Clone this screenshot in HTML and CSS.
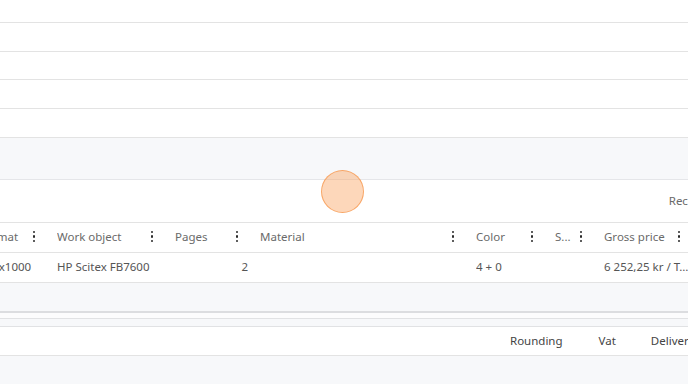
FILE: index.html
```html
<!DOCTYPE html>
<html>
<head>
<meta charset="utf-8">
<link rel="stylesheet" href="styles.css">
</head>
<body>
<div class="page">
  <div class="row r-top"></div>
  <div class="row r-plain"></div>
  <div class="row r-plain2"></div>
  <div class="row r-plain"></div>
  <div class="row r-plain"></div>
  <div class="band band-a"></div>
  <div class="toolbar"><span class="rec">Recalculate</span></div>
  <div class="grid">
    <div class="trow head">
      <div class="cell"><span class="txt">Format</span><span class="kebab"><i></i><i></i><i></i></span></div>
      <div class="cell"><span class="txt">Work object</span><span class="kebab"><i></i><i></i><i></i></span></div>
      <div class="cell"><span class="txt">Pages</span><span class="kebab"><i></i><i></i><i></i></span></div>
      <div class="cell"><span class="txt">Material</span><span class="kebab"><i></i><i></i><i></i></span></div>
      <div class="cell"><span class="txt">Color</span><span class="kebab"><i></i><i></i><i></i></span></div>
      <div class="cell"><span class="txt">S...</span><span class="kebab"><i></i><i></i><i></i></span></div>
      <div class="cell"><span class="txt">Gross price</span><span class="kebab"><i></i><i></i><i></i></span></div>
    </div>
    <div class="trow data">
      <div class="cell"><span class="txt">700x1000</span></div>
      <div class="cell"><span class="txt">HP Scitex FB7600</span></div>
      <div class="cell num"><span class="txt">2</span></div>
      <div class="cell"><span class="txt"></span></div>
      <div class="cell"><span class="txt">4 + 0</span></div>
      <div class="cell"><span class="txt"></span></div>
      <div class="cell"><span class="txt clip">6 252,25 kr / Total</span></div>
    </div>
  </div>
  <div class="band band-b"></div>
  <div class="strip s1"></div>
  <div class="strip s2"></div>
  <div class="footer">
    <span class="f-round">Rounding</span>
    <span class="f-vat">Vat</span>
    <span class="f-del">Delivery</span>
  </div>
  <div class="band band-c"></div>
  <div class="touch"></div>
</div>
</body>
</html>
```
FILE: styles.css
```css
* { box-sizing: border-box; }
html, body { margin: 0; padding: 0; }
body {
  width: 688px;
  height: 384px;
  overflow: hidden;
  background: #fff;
  font-family: "Noto Sans", "DejaVu Sans", sans-serif;
  font-size: 11.5px;
  color: #5c5c5c;
}
.page {
  position: relative;
  width: 688px;
  height: 384px;
  overflow: hidden;
  display: flex;
  flex-direction: column;
}
.row { border-bottom: 1px solid #e3e3e3; flex: none; }
.r-top { height: 23px; }
.r-plain { height: 29px; }
.r-plain2 { height: 28px; }
.band { background: #f7f8fa; flex: none; }
.band-a { height: 42px; border-bottom: 1px solid #e5e6e9; }
.toolbar {
  height: 43px;
  flex: none;
  display: flex;
  align-items: center;
  justify-content: flex-end;
  overflow: hidden;
  border-bottom: 1px solid #e3e3e3;
  padding-bottom: 1px;
}
.rec {
  white-space: nowrap;
  margin-right: -42px;
  color: #6a6a6a;
}
.grid {
  margin-left: -33px;
  flex: none;
}
.trow {
  display: grid;
  grid-template-columns: 78px 118px 85px 216px 79px 49px 98px;
  height: 30px;
  border-bottom: 1px solid #e3e3e3;
}
.cell {
  display: flex;
  align-items: center;
  padding-left: 12px;
  padding-bottom: 2px;
  overflow: hidden;
  white-space: nowrap;
}
.txt { flex: 1; overflow: hidden; white-space: nowrap; }
.clip { text-overflow: ellipsis; }
.head .txt { color: #6a6a6a; }
.data .txt { color: #555; }
.num .txt { text-align: right; }
.kebab {
  display: flex;
  flex-direction: column;
  gap: 2px;
  width: 2px;
  margin: 0 10px 0 6px;
  flex: none;
}
.kebab i {
  display: block;
  width: 2.4px;
  height: 2.4px;
  border-radius: 50%;
  background: #2a2a2a;
}
.band-b { height: 30px; border-bottom: 2px solid #dcdde0; }
.strip { flex: none; }
.s1 { height: 6px; background: #fcfcfd; border-bottom: 1px solid #e1e2e4; }
.s2 { height: 8px; background: #f7f8fa; border-bottom: 1px solid #e1e2e4; }
.footer {
  height: 29px;
  flex: none;
  display: flex;
  align-items: center;
  border-bottom: 1px solid #e3e3e3;
  white-space: nowrap;
  color: #444;
  overflow: hidden;
  padding-bottom: 2px;
}
.f-round { margin-left: 510px; }
.f-vat { margin-left: 36px; }
.f-del { margin-left: 35px; }
.band-c { flex: 1; }
.touch {
  position: absolute;
  left: 321px;
  top: 170px;
  width: 43px;
  height: 43px;
  border-radius: 50%;
  background: rgba(251, 160, 90, 0.42);
  border: 1.5px solid rgba(247, 150, 75, 0.75);
}
```
